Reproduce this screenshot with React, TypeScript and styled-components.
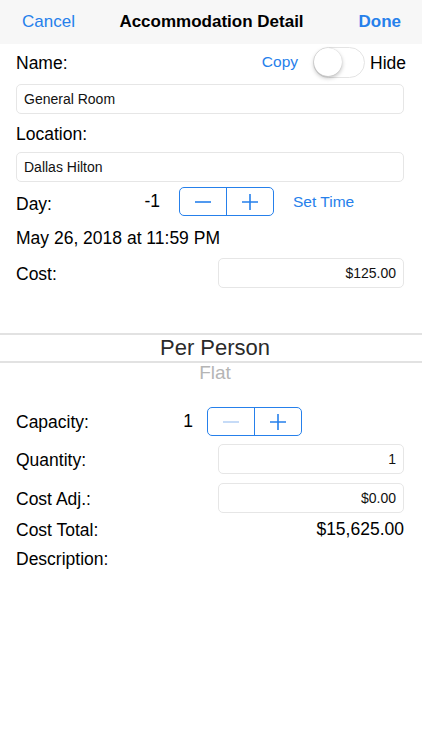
import styled, { createGlobalStyle } from 'styled-components';

const Global = createGlobalStyle`
    html, body {
        margin: 0;
        padding: 0;
        background: #fff;
        font-family: "Liberation Sans", Arial, sans-serif;
        color: #000;
    }
`;

const blue = '#2680eb';

const Page = styled.div`
    width: 422px;
    height: 750px;
    background: #fff;
    overflow: hidden;
`;

const NavBar = styled.div`
    height: 44px;
    background: #f7f7f7;
    display: grid;
    grid-template-columns: 1fr auto 1fr;
    align-items: center;
    padding: 0 21px 0 22px;
    font-size: 17px;
`;

const NavButton = styled.span<{ $bold?: boolean }>`
    color: ${blue};
    font-weight: ${(p) => (p.$bold ? 700 : 400)};
    justify-self: ${(p) => (p.$bold ? 'end' : 'start')};
`;

const NavTitle = styled.span`
    font-weight: 700;
    color: #000;
`;

const Form = styled.div`
    padding: 0 18px 0 16px;
    display: flex;
    flex-direction: column;
`;

const Row = styled.div<{ $h: number; $mt?: number; $mr?: number }>`
    height: ${(p) => p.$h}px;
    margin-top: ${(p) => p.$mt ?? 0}px;
    margin-right: ${(p) => p.$mr ?? 0}px;
    display: flex;
    align-items: center;
`;

const Label = styled.span<{ $w?: number; $dy?: number }>`
    font-size: 17.5px;
    width: ${(p) => (p.$w ? `${p.$w}px` : 'auto')};
    flex: ${(p) => (p.$w ? 'none' : '1')};
    padding-top: ${(p) => p.$dy ?? 2}px;
`;

const LinkText = styled.span`
    color: ${blue};
    font-size: 15.5px;
`;

const Switch = styled.div`
    width: 50px;
    height: 29px;
    border-radius: 16px;
    border: 1px solid #e4e4e4;
    background: #fff;
    margin: 0 5px 0 15px;
    position: relative;
`;

const Knob = styled.div`
    position: absolute;
    left: 0;
    top: 0;
    width: 28px;
    height: 28px;
    border-radius: 50%;
    background: #fff;
    box-shadow: 0 2px 4px rgba(0, 0, 0, 0.25), 0 0 1px rgba(0, 0, 0, 0.2);
`;

const Input = styled.div<{ $w?: number; $right?: boolean; $mt?: number }>`
    height: 30px;
    box-sizing: border-box;
    width: ${(p) => (p.$w ? `${p.$w}px` : '100%')};
    margin-top: ${(p) => p.$mt ?? 0}px;
    margin-left: ${(p) => (p.$w ? 'auto' : '0')};
    border: 1px solid #e6e6e6;
    border-radius: 5px;
    display: flex;
    align-items: center;
    justify-content: ${(p) => (p.$right ? 'flex-end' : 'flex-start')};
    padding: 0 7px;
    font-size: 14px;
    color: #111;
`;

const Value = styled.span<{ $gap: number }>`
    width: 20px;
    text-align: right;
    font-size: 17.5px;
    margin-right: ${(p) => p.$gap}px;
`;

const Stepper = styled.div`
    width: 95px;
    height: 29px;
    box-sizing: border-box;
    border: 1px solid ${blue};
    border-radius: 5px;
    display: flex;
    margin-right: 19px;
`;

const StepButton = styled.div<{ $dim?: boolean }>`
    flex: 1;
    display: flex;
    align-items: center;
    justify-content: center;
    color: ${(p) => (p.$dim ? '#b8d3f5' : blue)};
    & + & {
        border-left: 1px solid ${blue};
    }
`;

const DateText = styled.span`
    font-size: 17.5px;
`;

const Total = styled.span`
    font-size: 17.5px;
    margin-left: auto;
`;

const Picker = styled.div`
    margin: 45px -18px 0 -16px;
    display: flex;
    flex-direction: column;
    align-items: center;
`;

const Selected = styled.div`
    width: 100%;
    box-sizing: border-box;
    padding-left: 8px;
    height: 30px;
    border-top: 2px solid #e2e2e2;
    border-bottom: 2px solid #e2e2e2;
    display: flex;
    align-items: center;
    justify-content: center;
    font-size: 22px;
    color: #2a2a2a;
`;

const Option = styled.div`
    font-size: 19px;
    color: #b5b5b5;
    height: 22px;
    line-height: 20px;
    padding-left: 8px;
`;

function Minus() {
    return (
        <svg width="18" height="18" viewBox="0 0 18 18">
            <path d="M1 9h16" stroke="currentColor" strokeWidth="1.6" />
        </svg>
    );
}

function Plus() {
    return (
        <svg width="18" height="18" viewBox="0 0 18 18">
            <path d="M1 9h16M9 1v16" stroke="currentColor" strokeWidth="1.6" />
        </svg>
    );
}

export default function App() {
    return (
        <Page>
            <Global />
            <NavBar>
                <NavButton>Cancel</NavButton>
                <NavTitle>Accommodation Detail</NavTitle>
                <NavButton $bold>Done</NavButton>
            </NavBar>
            <Form>
                <Row $h={32} $mt={2} $mr={-3}>
                    <Label>Name:</Label>
                    <LinkText>Copy</LinkText>
                    <Switch>
                        <Knob />
                    </Switch>
                    <Label $w={37}>Hide</Label>
                </Row>
                <Input $mt={6}>General Room</Input>
                <Row $h={38}>
                    <Label>Location:</Label>
                </Row>
                <Input>Dallas Hilton</Input>
                <Row $h={29} $mt={5}>
                    <Label $w={124} $dy={6}>
                        Day:
                    </Label>
                    <Value $gap={19}>-1</Value>
                    <Stepper>
                        <StepButton>
                            <Minus />
                        </StepButton>
                        <StepButton>
                            <Plus />
                        </StepButton>
                    </Stepper>
                    <LinkText>Set Time</LinkText>
                </Row>
                <Row $h={39} $mt={3}>
                    <DateText>May 26, 2018 at 11:59 PM</DateText>
                </Row>
                <Row $h={30}>
                    <Label>Cost:</Label>
                    <Input $w={186} $right>
                        $125.00
                    </Input>
                </Row>
                <Picker>
                    <Selected>Per Person</Selected>
                    <Option>Flat</Option>
                </Picker>
                <Row $h={29} $mt={22}>
                    <Label $w={157}>Capacity:</Label>
                    <Value $gap={14}>1</Value>
                    <Stepper>
                        <StepButton $dim>
                            <Minus />
                        </StepButton>
                        <StepButton>
                            <Plus />
                        </StepButton>
                    </Stepper>
                </Row>
                <Row $h={30} $mt={8}>
                    <Label>Quantity:</Label>
                    <Input $w={186} $right>
                        1
                    </Input>
                </Row>
                <Row $h={30} $mt={9}>
                    <Label>Cost Adj.:</Label>
                    <Input $w={186} $right>
                        $0.00
                    </Input>
                </Row>
                <Row $h={32}>
                    <Label>Cost Total:</Label>
                    <Total>$15,625.00</Total>
                </Row>
                <Row $h={26}>
                    <Label>Description:</Label>
                </Row>
            </Form>
        </Page>
    );
}
